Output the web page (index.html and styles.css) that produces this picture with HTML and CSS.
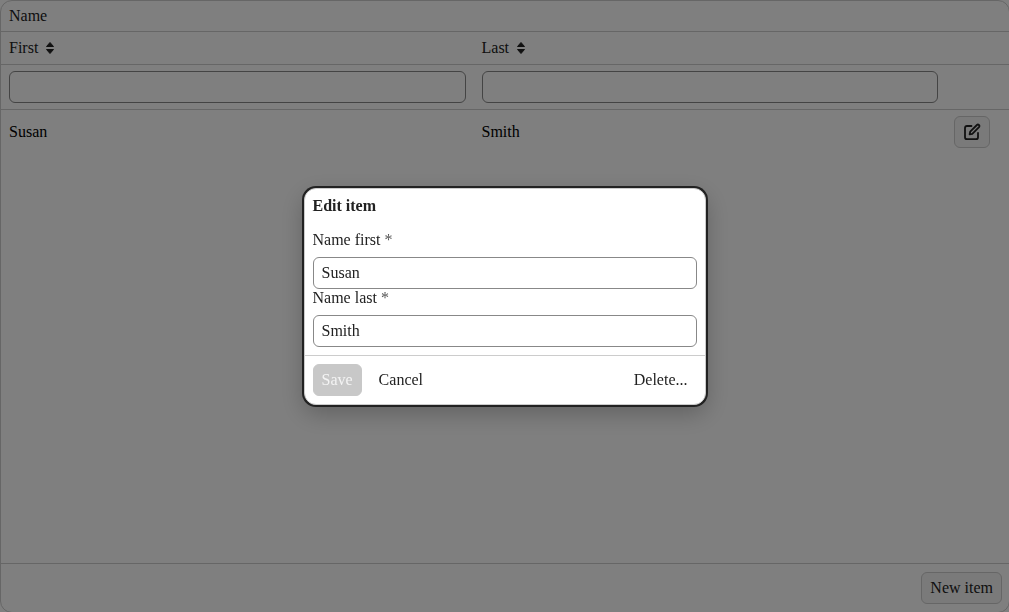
FILE: index.html
```html
<!DOCTYPE html>
<html lang="en">
<head>
<meta charset="utf-8">
<title>Name</title>
<link rel="stylesheet" href="styles.css">
</head>
<body>
<main class="table">
  <header class="title">Name</header>
  <div class="row heads">
    <div class="cell">First <svg class="sort" viewBox="0 0 10 14"><path d="M5 1.500 8.500 5.500H1.500ZM5 12.500 1.500 8.500H8.500Z"/></svg></div>
    <div class="cell">Last <svg class="sort" viewBox="0 0 10 14"><path d="M5 1.500 8.500 5.500H1.500ZM5 12.500 1.500 8.500H8.500Z"/></svg></div>
  </div>
  <div class="row filters">
    <div class="cell"><input class="input" aria-label="Filter first"></div>
    <div class="cell"><input class="input" aria-label="Filter last"></div>
  </div>
  <div class="content">
    <div class="row item">
      <div class="cell">Susan</div>
      <div class="cell">Smith</div>
      <div class="cell"><button class="button icon-button" aria-label="Edit"><svg class="edit" viewBox="0 0 18 18"><path d="M8.500 3H4Q2 3 2 5V14.200Q2 16.200 4 16.200H13Q15 16.200 15 14.200V10M6.600 11.400 7.200 8.700 13.900 2Q14.900 1.100 15.900 2Q16.900 3 16 4.100L9.300 10.800Z"/></svg></button></div>
    </div>
  </div>
  <footer class="footer"><button class="button">New item</button></footer>
</main>
<div class="backdrop">
  <section class="dialog" role="dialog" aria-label="Edit item">
    <h2 class="dialog-title">Edit item</h2>
    <div class="form">
      <label class="field"><span class="label">Name first <span class="required">*</span></span><input class="input" value="Susan"></label>
      <label class="field"><span class="label">Name last <span class="required">*</span></span><input class="input" value="Smith"></label>
    </div>
    <div class="actions">
      <button class="button save" disabled>Save</button>
      <button class="button plain">Cancel</button>
      <button class="button plain delete">Delete...</button>
    </div>
  </section>
</div>
</body>
</html>
```
FILE: styles.css
```css
* { box-sizing: border-box; }
html, body { height: 100%; margin: 0; overflow: hidden; }
body, button, input { font: 16px/20px "Liberation Serif", "Times New Roman", serif; color: #222; }
body { background: #fff; }
.table { display: flex; flex-direction: column; width: 1010px; height: 613px; border: 1px solid #ccc; border-radius: 12px; }
.title { height: 31px; padding: 5px 8px; border-bottom: 1px solid #ccc; }
.row { display: grid; grid-template-columns: 472.5px 472.5px 52px; align-items: center; }
.cell { display: flex; align-items: center; padding: 0 8px; }
.heads { height: 33px; border-bottom: 1px solid #ccc; }
.sort { width: 10px; height: 14px; margin-left: 7px; fill: #222; stroke: #222; stroke-width: 1; stroke-linejoin: round; }
.filters { height: 45px; border-bottom: 1px solid #ccc; }
.input { display: block; width: 100%; height: 32px; padding: 0 8px; border: 1px solid #888; border-radius: 6px; background: #fff; outline: none; }
.content { flex: 1; color: #000; }
.item { height: 44px; }
.button { height: 32px; padding: 0 8px; border: 1px solid #ccc; border-radius: 6px; background: #f4f4f4; white-space: nowrap; }
.icon-button { display: flex; align-items: center; justify-content: center; width: 36px; }
.edit { flex: none; width: 18px; height: 18px; fill: none; stroke: #222; stroke-width: 1.8; stroke-linecap: round; stroke-linejoin: round; }
.footer { display: flex; justify-content: flex-end; align-items: flex-start; height: 49px; padding: 8px 7px; border-top: 1px solid #ccc; }
.backdrop { position: fixed; inset: 0; display: flex; justify-content: center; align-items: flex-start; padding-top: 188px; background: rgba(0, 0, 0, .5); }
.dialog { width: 402px; height: 217px; border: 1px solid #ccc; border-radius: 12px; background: #fff; box-shadow: 0 0 0 2px #222, 0 8px 24px rgba(0, 0, 0, .25); }
.dialog-title { margin: 0; padding: 7px 8px 14px; font-size: 16px; line-height: 20px; }
.form { padding: 0 8px 8px; }
.field { display: block; }
.label { display: block; height: 26px; line-height: 18px; }
.field:first-child .label { height: 27px; line-height: 20px; }
.required { color: #555; }
.actions { display: flex; gap: 8px; padding: 8px; border-top: 1px solid #ccc; }
.save { border-color: #c8c8c8; background: #c8c8c8; color: #f4f4f4; }
.plain { border-color: transparent; background: transparent; }
.delete { margin-left: auto; }
```
